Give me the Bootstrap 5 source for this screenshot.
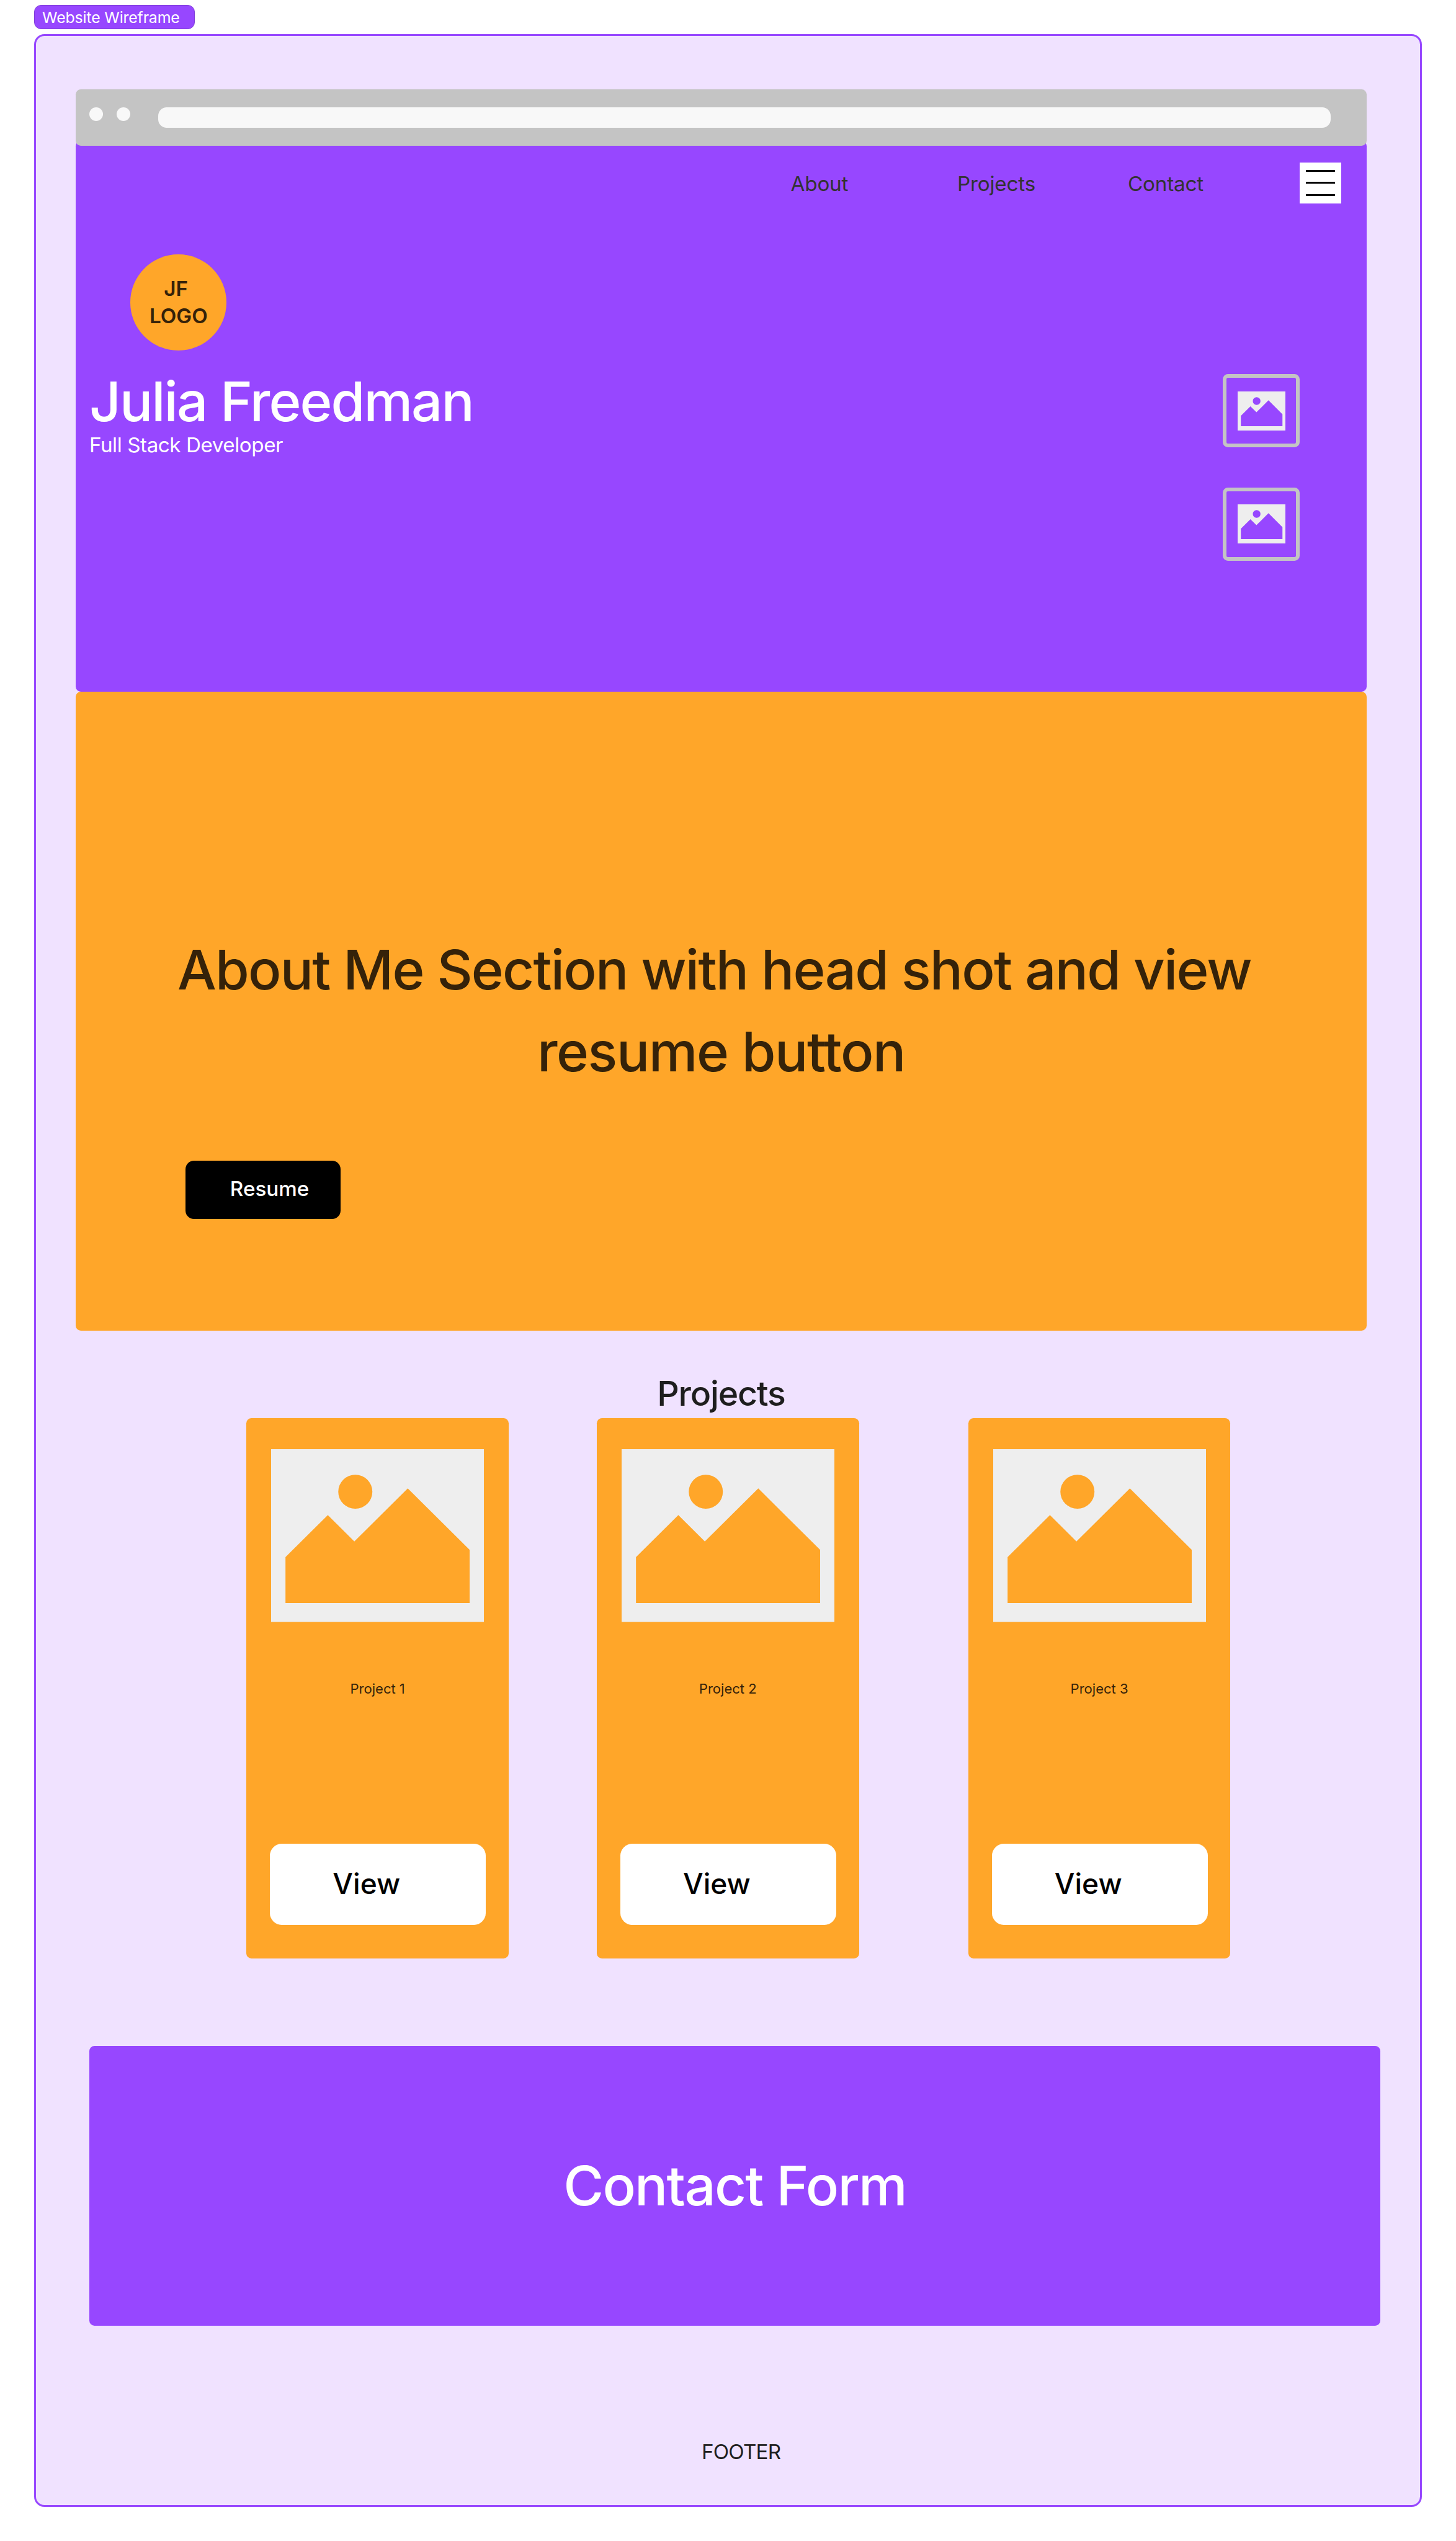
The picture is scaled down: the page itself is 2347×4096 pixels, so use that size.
<!DOCTYPE html>
<html lang="en">
<head>
<meta charset="utf-8">
<meta name="viewport" content="width=device-width, initial-scale=1">
<title>Website Wireframe</title>
<link href="https://cdn.jsdelivr.net/npm/bootstrap@5.3.0/dist/css/bootstrap.min.css" rel="stylesheet">
<style>
  /* 1rem is ten units of the 3392-unit-wide board */
  html { font-size: calc(100vw / 339.2); }
  body { font-family: Inter, "Liberation Sans", sans-serif; font-weight: 400; font-size: 4.8rem; line-height: 1; background: #fff; color: #1e1e1e; overflow: hidden; }
  :root { --violet: #9747ff; --amber: #ffa629; --amber-ink: #352209; }
  h1, h2, h3, p { margin: 0; line-height: 1; font-weight: 500; white-space: nowrap; }
  .board { padding: 1.2rem 8rem 0; }
  .board-label { width: 37.4rem; height: 5.6rem; margin-bottom: 1.2rem; padding: .3rem 0 0 1.7rem; border: .2rem solid #7f3dd9; border-radius: 1.6rem; background: var(--violet); font-size: 3.6rem; letter-spacing: -.007em; }
  .board-frame { width: 323.2rem; height: 576rem; border: 3px solid var(--violet); border-radius: 2.4rem; background: #f0e2ff; padding: calc(12.8rem - 3px) 0 0 calc(9.6rem - 3px); }
  .page { width: 300.8rem; }
  .violet { background: var(--violet); border-radius: 1.2rem; color: #fff; }
  .amber { background: var(--amber); border-radius: 1.2rem; color: var(--amber-ink); }

  .browser-bar { position: relative; z-index: 1; height: 13.2rem; padding: 4.2rem 8.4rem 0 3.2rem; background: #c4c4c4; border-radius: 1.2rem; }
  .dot { width: 3.2rem; height: 3.2rem; margin-right: 3.2rem; background: #f8f8f8; }
  .address { height: 4.8rem; margin-left: 3.2rem; border-radius: 2rem; background: #f8f8f8; }

  .hero { height: 128.4rem; margin-top: -1.2rem; padding-top: 5rem; }
  .hero-nav { height: 9.6rem; padding: 0 5.96rem 0 0; }
  .hero-nav a { color: #333; padding: .5rem 0 0; letter-spacing: -.005em; }
  .w-about { width: 38.8rem; } .w-projects { width: 39.75rem; } .w-contact { width: 40.1rem; }
  .burger { width: 9.6rem; height: 9.6rem; border: 0; border-radius: 0; padding: 0; gap: calc(2.8rem - 3px); background: #fff; }
  .burger span { width: 6.8rem; height: 3px; background: #000; }
  .logo { width: 22.4rem; height: 22.4rem; margin: 11.8rem 0 5.6rem 12.8rem; background: var(--amber); color: var(--amber-ink); font-weight: 600; line-height: 6.4rem; }
  .intro { padding: 0 15.6rem 0 3.2rem; }
  .display-text { font-size: 12.8rem; letter-spacing: -.022em; }
  .role { margin-top: 1.3rem; font-size: 4.8rem; font-weight: 400; letter-spacing: -.0135em; }
  .thumbs { gap: 9.4rem; }
  .thumb { width: 18rem; height: 17rem; border: 6px solid #c4c4c4; border-radius: 1.2rem; padding-left: .2rem; }
  .thumb svg { width: 11.2rem; height: 9.1rem; }

  .about { height: 148.8rem; padding-top: 55.1rem; }
  .about h2 { line-height: 19.2rem; letter-spacing: -.0202em; }
  .about h2 span { letter-spacing: -.016em; }
  .resume { display: block; width: 36.2rem; height: 13.6rem; margin: 15.7rem 0 0 25.6rem; padding: 0 0 .3rem 10.4rem; border: 0; border-radius: 2rem; background: #000; color: #fff; font-size: 4.8rem; font-weight: 450; line-height: 1; }

  .projects-title { margin: 10.59rem 0 1.81rem; font-size: 8rem; letter-spacing: -.021em; }
  .project-row { padding-left: 39.82rem; }
  .project { width: 61.1rem; height: 125.9rem; border: 0; padding: 7.2rem 0 7.8rem; }
  .project + .project { margin-left: 20.5rem; }
  .project + .project + .project { margin-left: 25.45rem; }
  .project svg { width: 49.6rem; height: 40.3rem; margin-left: 5.8rem; }
  .project h3 { margin-top: 13.94rem; font-size: 3.2rem; font-weight: 400; letter-spacing: -.002em; }
  .view { width: 50.3rem; height: 18.9rem; margin-left: 5.5rem; padding: 0 0 .4rem 14.6rem; border: 0; border-radius: 2.8rem; background: #fff; color: #000; font-size: 6.67rem; font-weight: 450; line-height: 1; }

  .contact { height: 65.2rem; margin: 20.3rem 0 27.1rem 3.2rem; width: 300.8rem; }
  .contact h2 { letter-spacing: -.02em; }
  .page-footer { padding-left: 9.3rem; letter-spacing: -.024em; }
</style>
</head>
<body>
<svg class="d-none" xmlns="http://www.w3.org/2000/svg">
  <symbol id="picture" viewBox="0 0 496 403" preserveAspectRatio="none">
    <path fill="#eee" fill-rule="evenodd" d="M0 0H496V403H0ZM33.5 251.6V358.6H462.5V234.6L318.4 91.4L193.9 215L132.2 153.4ZM156.5 99.2a39.7 39.7 0 1 0 79.4 0a39.7 39.7 0 1 0 -79.4 0Z"/>
  </symbol>
</svg>
<div class="board">
  <div class="board-label d-flex align-items-center text-white">Website Wireframe</div>
  <div class="board-frame">
    <div class="page">
      <div class="browser-bar d-flex align-items-start">
        <span class="dot rounded-circle"></span>
        <span class="dot rounded-circle"></span>
        <div class="address flex-grow-1"></div>
      </div>

      <header class="hero violet">
        <nav class="hero-nav d-flex justify-content-end align-items-center">
          <a class="nav-link w-about" href="#about">About</a>
          <a class="nav-link w-projects" href="#projects">Projects</a>
          <a class="nav-link w-contact" href="#contact">Contact</a>
          <button class="burger btn d-flex flex-column align-items-center justify-content-center" type="button" aria-label="Menu"><span></span><span></span><span></span></button>
        </nav>
        <div class="logo rounded-circle d-flex align-items-center justify-content-center text-center"><div>JF&nbsp;<br>LOGO</div></div>
        <div class="intro d-flex justify-content-between align-items-start">
          <div>
            <h1 class="display-text">Julia Freedman</h1>
            <p class="role">Full Stack Developer</p>
          </div>
          <div class="thumbs d-flex flex-column">
            <div class="thumb d-flex align-items-center justify-content-center"><svg><use href="#picture"/></svg></div>
            <div class="thumb d-flex align-items-center justify-content-center"><svg><use href="#picture"/></svg></div>
          </div>
        </div>
      </header>

      <section class="about amber" id="about">
        <h2 class="display-text text-center">About Me Section with head shot and view&nbsp;<br><span>resume button</span></h2>
        <button class="resume btn text-start" type="button">Resume</button>
      </section>

      <section id="projects">
        <h2 class="projects-title text-center">Projects</h2>
        <div class="project-row d-flex">
          <article class="project card amber">
            <svg><use href="#picture"/></svg>
            <h3 class="text-center">Project 1</h3>
            <button class="view btn text-start mt-auto" type="button">View</button>
          </article>
          <article class="project card amber">
            <svg><use href="#picture"/></svg>
            <h3 class="text-center">Project 2</h3>
            <button class="view btn text-start mt-auto" type="button">View</button>
          </article>
          <article class="project card amber">
            <svg><use href="#picture"/></svg>
            <h3 class="text-center">Project 3</h3>
            <button class="view btn text-start mt-auto" type="button">View</button>
          </article>
        </div>
      </section>

      <section class="contact violet d-flex align-items-center justify-content-center" id="contact">
        <h2 class="display-text">Contact Form</h2>
      </section>

      <footer class="page-footer text-center">FOOTER</footer>
    </div>
  </div>
</div>
<script src="https://cdn.jsdelivr.net/npm/bootstrap@5.3.0/dist/js/bootstrap.bundle.min.js"></script>
</body>
</html>
